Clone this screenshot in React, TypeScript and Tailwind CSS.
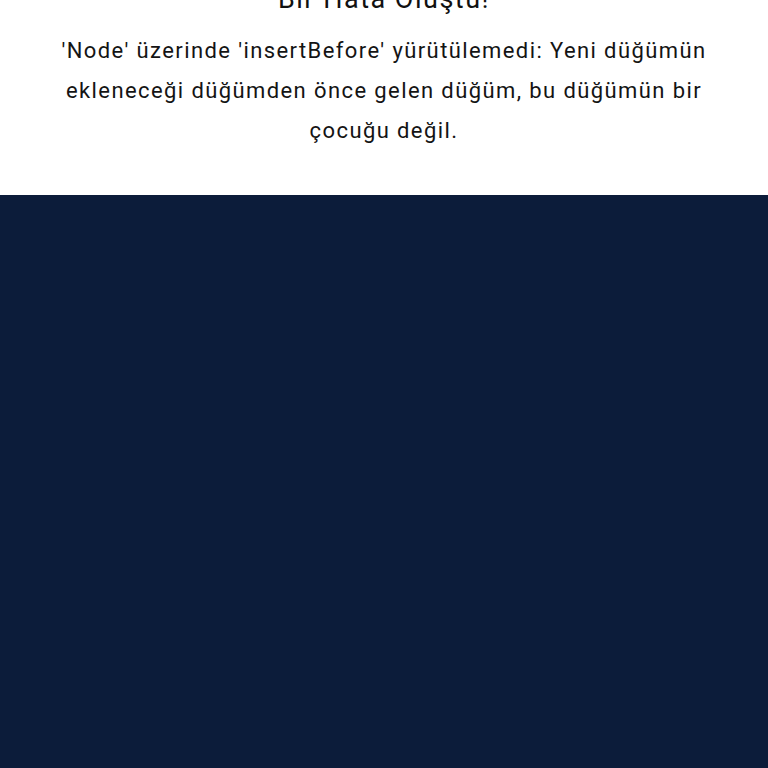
export default function App() {
  return (
    <div className="min-h-[768px] flex flex-col bg-white" style={{ fontFamily: "Roboto, 'Noto Sans', sans-serif" }}>
      <div className="flex flex-col items-center text-center px-[40px] -mt-[19px] pb-[44px]">
        <h1 className="text-[27px] leading-[36px] tracking-[1.5px] text-[#111111]">Bir Hata Oluştu!</h1>
        <p className="mt-[14px] text-[22px] leading-[40px] tracking-[1.4px] text-[#141414] max-w-[680px]">
          'Node' üzerinde 'insertBefore' yürütülemedi: Yeni düğümün ekleneceği düğümden önce gelen düğüm, bu düğümün bir çocuğu değil.
        </p>
      </div>
      <div className="flex-1 bg-[#0c1c3a]" />
    </div>
  );
}
